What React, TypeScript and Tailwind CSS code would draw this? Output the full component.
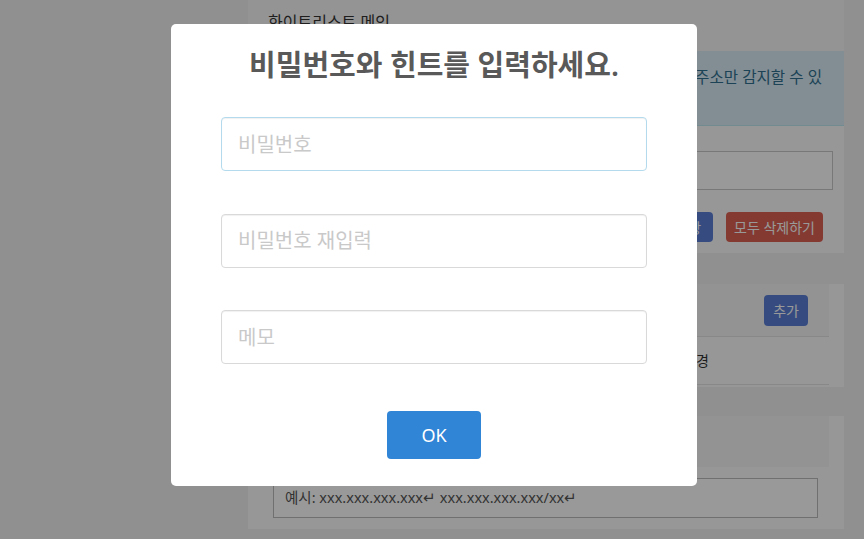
import { useState } from "react";

const sans = "font-['Noto_Sans','Noto_Sans_CJK_KR',sans-serif]";

function BackgroundPage() {
  return (
    <div className={`flex h-[539px] w-full overflow-hidden bg-[#f1f1f1] ${sans}`}>
      <div className="w-[248px] shrink-0" />

      <main className="flex w-[596px] shrink-0 flex-col">
        <div className="h-[51px] bg-[#f7f7f7] pl-5 pt-[10px] text-[16px] leading-[24px] text-[#333]">
          화이트리스트 메인
        </div>

        <div className="h-[75px] overflow-hidden border-b border-[#bce8f1] bg-[#d9edf7] pl-[15px] pr-[22px] pt-[14px] text-[15.6px] leading-[24px] text-[#31708f]">
          <div className="whitespace-nowrap text-right">
            관리자 페이지는 화이트리스트에 등록된 IP 주소만 감지할 수 있
          </div>
          <div>습니다.</div>
        </div>

        <div className="h-[127px] bg-[#fcfcfc] px-3">
          <div className="mr-[-1px] mt-[25px] h-[39px] border border-[#c8c8c8] bg-white" />
          <div className="mt-[22px] flex justify-end gap-[13px] pr-[9px]">
            <button className="h-[30px] rounded-[4px] bg-[#5a7fd6] px-3 text-[14px] text-white">
              설정 저장
            </button>
            <button className="h-[30px] rounded-[4px] bg-[#dc6152] px-[8px] text-[14px] text-white">
              모두 삭제하기
            </button>
          </div>
        </div>

        <div className="h-[31px]" />

        <div className="flex h-[103px] bg-[#fcfcfc]">
          <div className="w-[581px]">
            <div className="flex h-[53px] items-center justify-end border-b border-[#e3e3e3] bg-[#f5f5f5] pr-[21px]">
              <button className="h-[31px] rounded-[4px] bg-[#5a7fd6] px-[9px] text-[14px] text-white">
                추가
              </button>
            </div>
            <div className="flex h-[48px] items-center border-b border-[#e3e3e3] pl-[15px] text-[14px] text-[#333]">
              <span className="w-[280px]">IP 주소</span>
              <span className="w-[140px]">메모</span>
              <span>변경</span>
            </div>
          </div>
        </div>

        <div className="h-[29px]" />

        <div className="h-[113px] bg-[#fcfcfc]">
          <div className="h-[51px] w-[581px] bg-[#f5f5f5]" />
          <div className="ml-[25px] mt-[11px] flex h-[40px] w-[545px] items-center border border-[#bbb] bg-white px-[11px] text-[14.5px] text-[#555]">
            예시: xxx.xxx.xxx.xxx↵ xxx.xxx.xxx.xxx/xx↵
          </div>
        </div>
      </main>
    </div>
  );
}

function PasswordModal() {
  const [password, setPassword] = useState("");
  const [confirm, setConfirm] = useState("");
  const [memo, setMemo] = useState("");

  const inputClass =
    "h-[54px] w-full rounded-[4px] border bg-white px-4 text-[20px] text-[#545454] outline-none placeholder:text-[#c9c9c9] shadow-[inset_0_1px_1px_rgba(0,0,0,0.06)]";

  return (
    <div className="fixed inset-0 flex items-start justify-center bg-black/40 pl-[4px] pt-[24px]">
      <div className={`flex h-[462px] w-[526px] flex-col items-center rounded-[5px] bg-white px-[50px] ${sans}`}>
        <h2 className="mt-[23px] text-[29px] font-semibold leading-[36px] text-[#595959]">
          비밀번호와 힌트를 입력하세요.
        </h2>

        <div className="mt-[34px] flex w-full flex-col gap-[42.5px]">
          <input
            type="password"
            value={password}
            onChange={(e) => setPassword(e.target.value)}
            placeholder="비밀번호"
            className={`${inputClass} border-[#b4dbed] shadow-[0_0_3px_#c4e6f5]`}
          />
          <input
            type="password"
            value={confirm}
            onChange={(e) => setConfirm(e.target.value)}
            placeholder="비밀번호 재입력"
            className={`${inputClass} border-[#d9d9d9]`}
          />
          <input
            type="text"
            value={memo}
            onChange={(e) => setMemo(e.target.value)}
            placeholder="메모"
            className={`${inputClass} border-[#d9d9d9]`}
          />
        </div>

        <button className="mt-[47px] h-[48px] w-[94px] rounded-[4px] bg-[#3085d6] text-[18px] text-white">
          OK
        </button>
      </div>
    </div>
  );
}

export default function App() {
  return (
    <div className="relative h-[539px] w-full">
      <BackgroundPage />
      <PasswordModal />
    </div>
  );
}
